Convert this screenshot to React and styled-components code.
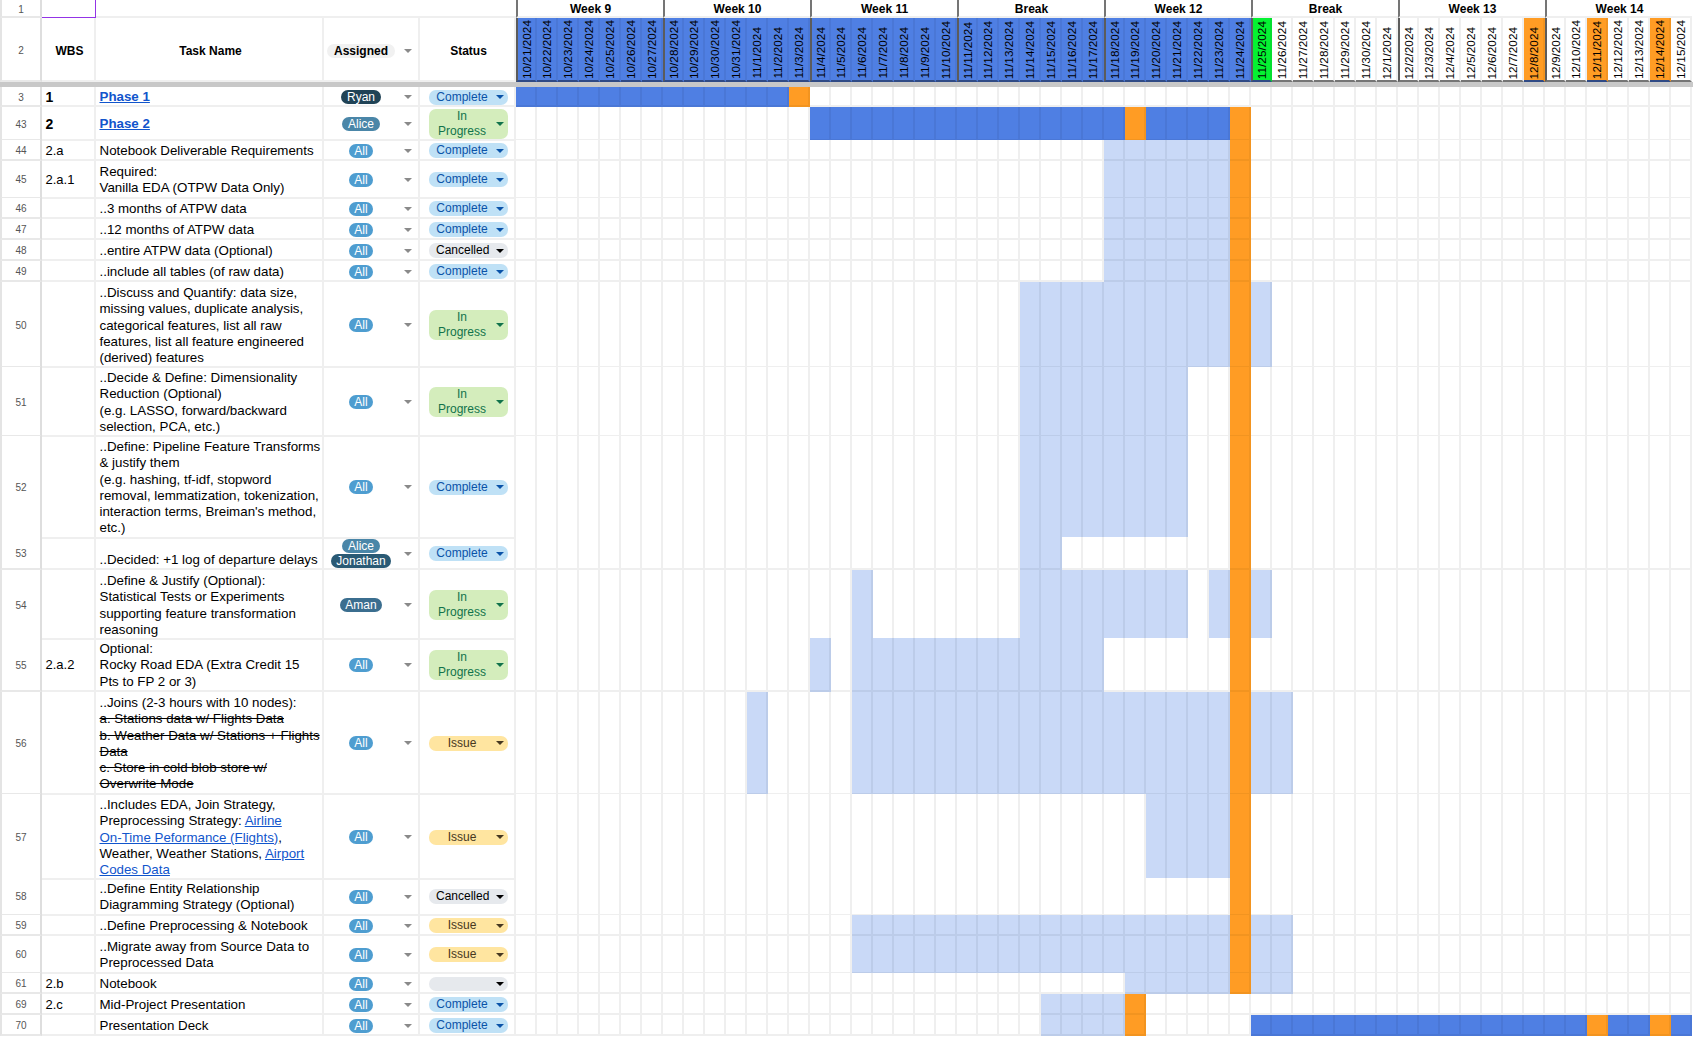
import styled, { createGlobalStyle } from "styled-components";

const GlobalStyle = createGlobalStyle`
    html, body {
        margin: 0;
        height: 100%;
        overflow: hidden;
        background: #fff;
    }
    * {
        box-sizing: border-box;
    }
`

const COLUMNS = "42px 54px 228px 96px 96px repeat(56, 21px)";

const fills = {
    blue: { bg: "#4f7fe3", line: "#4a77d6" },
    light: { bg: "#c9d9f7", line: "#bccce9" },
    orange: { bg: "#ff9c24", line: "#f29420" },
    green: { bg: "#05f232", line: "#05e02f" },
    none: { bg: "#fff", line: "#efefef" },
};

const statusColors = {
    Complete: { bg: "#bfe1f6", fg: "#0a53a8" },
    "In Progress": { bg: "#d4edbc", fg: "#11734b" },
    Cancelled: { bg: "#e6e9ed", fg: "#000" },
    Issue: { bg: "#ffe5a0", fg: "#473821" },
    "": { bg: "#e6e9ed", fg: "#000" },
};

const personColors = {
    All: "#4e9dd0",
    Ryan: "#204356",
    Alice: "#4a86a8",
    Jonathan: "#2a5a75",
    Aman: "#3b6e8f",
};

const Sheet = styled.div`
    width: 1693px;
    height: 1038px;
    overflow: hidden;
    font-family: "Liberation Sans", Arial, sans-serif;
    font-size: 13.33px;
    color: #000;
`

const Row = styled.div`
    display: grid;
    grid-template-columns: ${COLUMNS};
    height: ${(p) => p.$h}px;
`

const Freeze = styled.div`
    height: 5px;
    background: #c8c8c8;
`

const Gutter = styled.div`
    display: flex;
    align-items: center;
    justify-content: center;
    padding-top: 2px;
    font-size: 10px;
    color: #555;
    background: #fff;
    border-left: 2px solid #e4e4e4;
    border-right: 2px solid #dedede;
    border-bottom: 2px solid #e8e8e8;
`

const Cell = styled.div`
    display: flex;
    align-items: ${(p) => p.$valign || "center"};
    min-width: 0;
    padding: ${(p) => (p.$bold ? "2px" : "3px")} 3px 0 3.5px;
    line-height: 16.3px;
    white-space: nowrap;
    border-right: 2px solid #efefef;
    border-bottom: 2px solid #efefef;
    font-weight: ${(p) => (p.$bold ? 700 : 400)};
`

const WbsText = styled.span`
    font-size: ${(p) => (p.$bold ? "14px" : "13px")};
`

const SelectedCell = styled(Cell)`
    border-right: 1.5px solid #9334e6;
    border-bottom: 1.5px solid #9334e6;
`

const BlankSpan = styled.div`
    grid-column: span 3;
    border-bottom: 2px solid #efefef;
`

const HeadCell = styled(Cell)`
    justify-content: center;
    font-size: 12px;
    font-weight: 700;
    padding: 4px 0 0 3px;
`

const AssignedHead = styled.div`
    display: grid;
    grid-template-columns: 1fr 20px;
    align-items: center;
    justify-items: center;
    padding-top: 4px;
    font-size: 12px;
    font-weight: 700;
    border-right: 2px solid #efefef;
    border-bottom: 2px solid #efefef;
`

const HeadChip = styled.span`
    background: #f1f1f1;
    color: #000;
    border-radius: 7px;
    padding: 0 6.5px;
    line-height: 14px;
`

const Week = styled.div`
    grid-column: span 7;
    display: flex;
    align-items: center;
    justify-content: center;
    font-size: 12px;
    font-weight: 700;
    padding-top: 1px;
    border-left: 2px solid #757575;
    border-bottom: 2px solid #efefef;
`

const DayHead = styled.div`
    display: flex;
    justify-content: center;
    align-items: flex-end;
    padding: 0 0 1px 1px;
    background: ${(p) => fills[p.$fill].bg};
    border-right: 2px solid ${(p) => fills[p.$fill].line};
    border-left: ${(p) => (p.$first ? "2px solid #5c5c5c" : "none")};
    border-bottom: 2px solid ${(p) => (p.$fill === "none" ? "#757575" : "#2f4a85")};
`

const DayLabel = styled.span`
    writing-mode: vertical-rl;
    transform: rotate(180deg);
    font-size: 11.8px;
    line-height: 13px;
    white-space: nowrap;
`

const Day = styled.div`
    background: ${(p) => fills[p.$fill].bg};
    border-right: 2px solid ${(p) => fills[p.$fill].line};
    border-bottom: 2px solid ${(p) => fills[p.$fill].line};
`

const TaskLink = styled.a`
    color: #1155cc;
    text-decoration: underline;
`

const Struck = styled.span`
    text-decoration: line-through;
`

const Lines = styled.div`
    display: flex;
    flex-direction: column;
`

const AssignCell = styled.div`
    display: grid;
    grid-template-columns: 1fr 20px;
    align-items: center;
    justify-items: center;
    padding-top: 2px;
    border-right: 2px solid #efefef;
    border-bottom: 2px solid #efefef;
`

const ChipStack = styled.div`
    display: flex;
    flex-direction: column;
    align-items: center;
    gap: 1px;
`

const PersonChip = styled.span`
    background: ${(p) => personColors[p.$who]};
    color: #fff;
    font-size: 12px;
    line-height: 14px;
    height: 14px;
    padding: 0 5.5px;
    border-radius: 7px;
`

const Caret = styled.span`
    width: 0;
    height: 0;
    border-left: 4px solid transparent;
    border-right: 4px solid transparent;
    border-top: 4.5px solid ${(p) => p.$color || "#8a8a8a"};
`

const StatusCell = styled.div`
    display: flex;
    align-items: center;
    padding-top: 2px;
    padding-left: 9px;
    border-right: 2px solid #efefef;
    border-bottom: 2px solid #efefef;
`

const StatusChip = styled.div`
    flex: 0 0 79px;
    display: grid;
    grid-template-columns: 1fr 16px;
    align-items: center;
    justify-items: center;
    padding-left: 3px;
    text-align: center;
    background: ${(p) => statusColors[p.$status].bg};
    color: ${(p) => statusColors[p.$status].fg};
    font-size: 12px;
    line-height: 15px;
    min-height: 14px;
    border-radius: 7px;
`

const StatusText = styled.span`
    display: block;
    width: 52px;
`

const dates = [];
for (let i = 0; i < 56; i++) {
    const d = new Date(2024, 9, 21 + i);
    dates.push(`${d.getMonth() + 1}/${d.getDate()}/${d.getFullYear()}`);
}

const weeks = ["Week 9", "Week 10", "Week 11", "Break", "Week 12", "Break", "Week 13", "Week 14"];

const headFill = (i) => {
    if (i === 35) return "green";
    if (i === 48 || i === 51 || i === 54) return "orange";
    return i < 35 ? "blue" : "none";
};

const wrap = (...lines) => (
    <Lines>
        {lines.map((l, i) => <div key={i}>{l}</div>)}
    </Lines>
);

const rows = [
    { n: 3, h: 20, wbs: "1", bold: true, task: <TaskLink href="#">Phase 1</TaskLink>, who: ["Ryan"], status: "Complete",
      blue: [[0, 12]], orange: [13] },
    { n: 43, h: 33, wbs: "2", bold: true, task: <TaskLink href="#">Phase 2</TaskLink>, who: ["Alice"], status: "In Progress",
      blue: [[14, 28], [30, 33]], orange: [29, 34] },
    { n: 44, h: 21, wbs: "2.a", task: "Notebook Deliverable Requirements", who: ["All"], status: "Complete",
      light: [[28, 33]], orange: [34] },
    { n: 45, h: 37, wbs: "2.a.1", task: wrap("Required:", "Vanilla EDA (OTPW Data Only)"), who: ["All"], status: "Complete",
      light: [[28, 33]], orange: [34] },
    { n: 46, h: 21, task: "..3 months of ATPW data", who: ["All"], status: "Complete", light: [[28, 33]], orange: [34] },
    { n: 47, h: 21, task: "..12 months of ATPW data", who: ["All"], status: "Complete", light: [[28, 33]], orange: [34] },
    { n: 48, h: 21, task: "..entire ATPW data (Optional)", who: ["All"], status: "Cancelled", light: [[28, 33]], orange: [34] },
    { n: 49, h: 21, task: "..include all tables (of raw data)", who: ["All"], status: "Complete", light: [[28, 33]], orange: [34] },
    { n: 50, h: 85, task: wrap("..Discuss and Quantify: data size,", "missing values, duplicate analysis,", "categorical features, list all raw", "features, list all feature engineered", "(derived) features"),
      who: ["All"], status: "In Progress", light: [[24, 33], [35, 35]], orange: [34] },
    { n: 51, h: 69, task: wrap("..Decide & Define: Dimensionality", "Reduction (Optional)", "(e.g. LASSO, forward/backward", "selection, PCA, etc.)"),
      who: ["All"], status: "In Progress", light: [[24, 31]], orange: [34] },
    { n: 52, h: 101, task: wrap("..Define: Pipeline Feature Transforms", "& justify them", "(e.g. hashing, tf-idf, stopword", "removal, lemmatization, tokenization,", "interaction terms, Breiman's method,", "etc.)"),
      who: ["All"], status: "Complete", light: [[24, 31]], orange: [34] },
    { n: 53, h: 33, task: "..Decided: +1 log of departure delays", valign: "flex-end", who: ["Alice", "Jonathan"], status: "Complete",
      light: [[24, 25]], orange: [34] },
    { n: 54, h: 68, task: wrap("..Define & Justify (Optional):", "Statistical Tests or Experiments", "supporting feature transformation", "reasoning"),
      who: ["Aman"], status: "In Progress", light: [[16, 16], [24, 31], [33, 33], [35, 35]], orange: [34] },
    { n: 55, h: 54, wbs: "2.a.2", task: wrap("Optional:", "Rocky Road EDA (Extra Credit 15", "Pts to FP 2 or 3)"),
      who: ["All"], status: "In Progress", light: [[14, 14], [16, 27]], orange: [34] },
    { n: 56, h: 102, task: wrap("..Joins (2-3 hours with 10 nodes):", <Struck>a. Stations data w/ Flights Data</Struck>, <Struck>b. Weather Data w/ Stations + Flights</Struck>, <Struck>Data</Struck>, <Struck>c. Store in cold blob store w/</Struck>, <Struck>Overwrite Mode</Struck>),
      who: ["All"], status: "Issue", light: [[11, 11], [16, 33], [35, 36]], orange: [34] },
    { n: 57, h: 84, task: wrap("..Includes EDA, Join Strategy,", <>Preprocessing Strategy: <TaskLink href="#">Airline</TaskLink></>, <><TaskLink href="#">On-Time Peformance (Flights)</TaskLink>,</>, <>Weather, Weather Stations, <TaskLink href="#">Airport</TaskLink></>, <TaskLink href="#">Codes Data</TaskLink>),
      who: ["All"], status: "Issue", light: [[30, 33]], orange: [34] },
    { n: 58, h: 37, task: wrap("..Define Entity Relationship", "Diagramming Strategy (Optional)"), who: ["All"], status: "Cancelled", orange: [34] },
    { n: 59, h: 21, task: "..Define Preprocessing & Notebook", who: ["All"], status: "Issue", light: [[16, 33], [35, 36]], orange: [34] },
    { n: 60, h: 37, task: wrap("..Migrate away from Source Data to", "Preprocessed Data"), who: ["All"], status: "Issue", light: [[16, 33], [35, 36]], orange: [34] },
    { n: 61, h: 21, wbs: "2.b", task: "Notebook", who: ["All"], status: "", light: [[29, 33], [35, 36]], orange: [34] },
    { n: 69, h: 21, wbs: "2.c", task: "Mid-Project Presentation", who: ["All"], status: "Complete", light: [[25, 28]], orange: [29] },
    { n: 70, h: 21, task: "Presentation Deck", who: ["All"], status: "Complete",
      light: [[25, 28]], blue: [[35, 50], [52, 53], [55, 55]], orange: [29, 51, 54] },
];

const inSpans = (spans, i) => (spans || []).some(([a, b]) => i >= a && i <= b);

const fillFor = (row, i) => {
    if ((row.orange || []).includes(i)) return "orange";
    if (inSpans(row.blue, i)) return "blue";
    if (inSpans(row.light, i)) return "light";
    return "none";
};

const Status = ({ status }) => (
    <StatusChip $status={status}>
        <StatusText>{status}</StatusText>
        <Caret $color={statusColors[status].fg} />
    </StatusChip>
);

const App = () => {
    return (
        <Sheet>
            <GlobalStyle />
            <Row $h={18}>
                <Gutter>1</Gutter>
                <SelectedCell />
                <BlankSpan />
                {weeks.map((w, i) => <Week key={i}>{w}</Week>)}
            </Row>
            <Row $h={64}>
                <Gutter>2</Gutter>
                <HeadCell>WBS</HeadCell>
                <HeadCell>Task Name</HeadCell>
                <AssignedHead>
                    <HeadChip>Assigned</HeadChip>
                    <Caret />
                </AssignedHead>
                <HeadCell>Status</HeadCell>
                {dates.map((d, i) => (
                    <DayHead key={d} $fill={headFill(i)} $first={i % 7 === 0}>
                        <DayLabel>{d}</DayLabel>
                    </DayHead>
                ))}
            </Row>
            <Freeze />
            {rows.map((row) => (
                <Row key={row.n} $h={row.h}>
                    <Gutter>{row.n}</Gutter>
                    <Cell $bold={row.bold}><WbsText $bold={row.bold}>{row.wbs}</WbsText></Cell>
                    <Cell $bold={row.bold} $valign={row.valign}>{row.task}</Cell>
                    <AssignCell>
                        <ChipStack>
                            {row.who.map((w) => <PersonChip key={w} $who={w}>{w}</PersonChip>)}
                        </ChipStack>
                        <Caret />
                    </AssignCell>
                    <StatusCell>
                        <Status status={row.status} />
                    </StatusCell>
                    {dates.map((d, i) => <Day key={d} $fill={fillFor(row, i)} />)}
                </Row>
            ))}
        </Sheet>
    );
}

export default App
